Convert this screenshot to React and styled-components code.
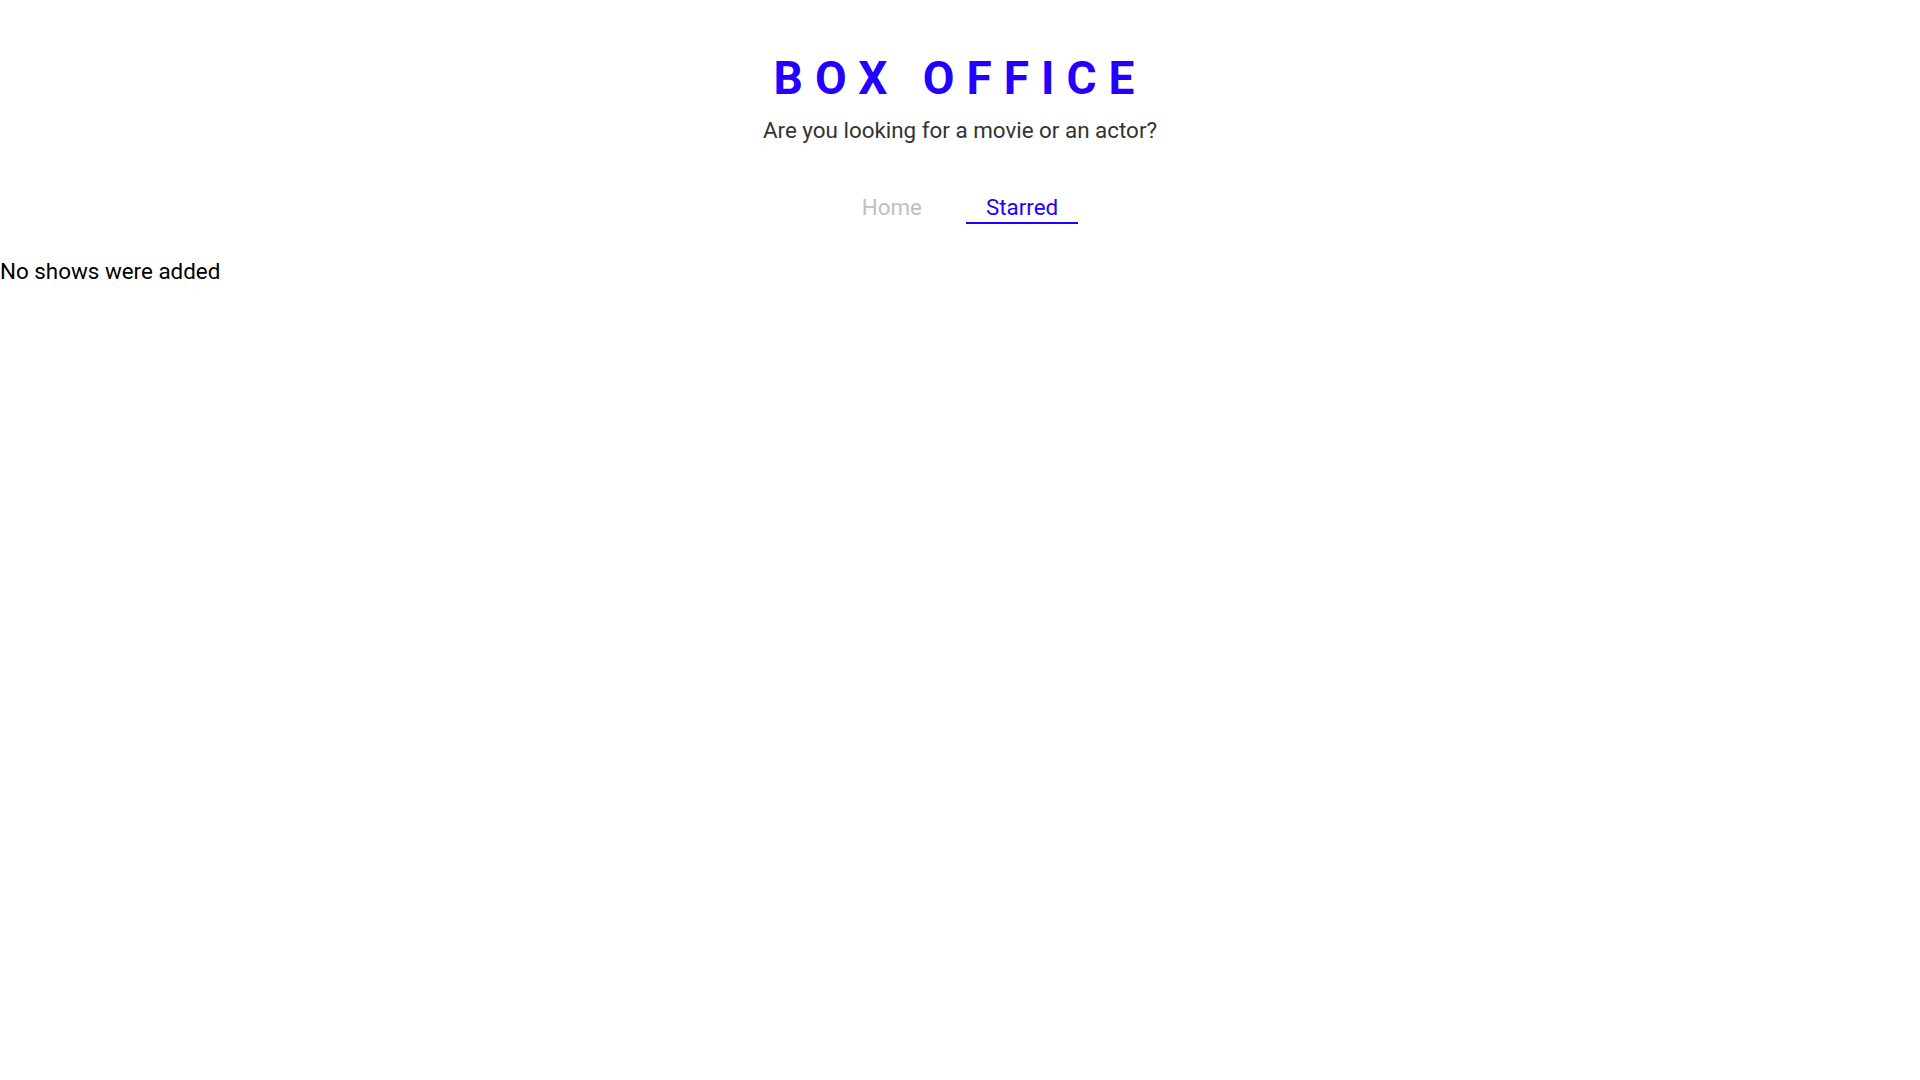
import React from 'react';
import styled, { createGlobalStyle } from 'styled-components';

const GlobalStyle = createGlobalStyle`
    body {
        margin: 0;
        background: #fff;
        font-family: Roboto, "Liberation Sans", sans-serif;
        color: #000;
    }
`

const App = () => {
    return (
        <>
            <GlobalStyle />
            <Header>
                <Title>BOX OFFICE</Title>
                <Subtitle>Are you looking for a movie or an actor?</Subtitle>
            </Header>
            <Nav>
                <NavLink>Home</NavLink>
                <NavLink active>Starred</NavLink>
            </Nav>
            <Message>No shows were added</Message>
        </>
    )
}

export default App

const Header = styled.div`
    text-align: center;
    padding-top: 51px;
`
const Title = styled.h1`
    margin: 0;
    font-size: 46px;
    font-weight: 700;
    letter-spacing: 12px;
    color: #2400ff;
    line-height: 54px;
`
const Subtitle = styled.p`
    margin: 12px 0 0;
    font-size: 22.4px;
    line-height: 26px;
    color: #333;
`
const Nav = styled.ul`
    display: flex;
    justify-content: center;
    gap: 24px;
    list-style: none;
    margin: 51px 0 0;
    padding: 0;
`
const NavLink = styled.li`
    font-size: 22.4px;
    line-height: 26px;
    padding: 0 20px 2px;
    color: ${({ active }) => active ? '#2400ff' : '#c0c0c0'};
    border-bottom: 2px solid ${({ active }) => active ? '#2400ff' : 'transparent'};
    cursor: pointer;
`
const Message = styled.p`
    margin: 34px 0 0;
    font-size: 22.4px;
    line-height: 26px;
`
